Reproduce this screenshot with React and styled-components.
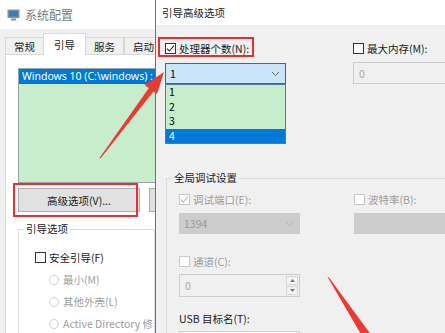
import styled, { createGlobalStyle } from "styled-components";

const GlobalStyle = createGlobalStyle`
  html, body { margin: 0; padding: 0; background: #fff; }
  body { width: 445px; height: 333px; overflow: hidden; }
  * { box-sizing: border-box; }
`;

const FONT = `"Noto Sans CJK SC", "Noto Sans", sans-serif`;

const Desktop = styled.div`
  position: relative;
  width: 445px;
  height: 333px;
  overflow: hidden;
  background: #fff;
  font-family: ${FONT};
  font-size: 10.5px;
  color: #1a1a1a;
`;

/* ---------- background window: 系统配置 ---------- */

const BgWindow = styled.div`
  position: absolute;
  left: 0;
  top: 0;
  width: 156px;
  height: 333px;
  overflow: hidden;
  display: flex;
  flex-direction: column;
  background: #f0f0f0;
`;

const BgTitle = styled.div`
  height: 29px;
  flex: none;
  background: #fff;
  display: flex;
  align-items: center;
  gap: 5px;
  padding-left: 7px;
  font-size: 12px;
  color: #7a7a7a;
`;

const TabStrip = styled.div`
  display: flex;
  align-items: flex-end;
  height: 25px;
  padding-left: 5px;
  flex: none;
`;

const Tab = styled.div`
  height: ${(p) => (p.$active ? 22 : 18)}px;
  padding: 0 ${(p) => (p.$active ? 10 : 8)}px;
  margin: 0 ${(p) => (p.$active ? -1 : 0)}px -1px;
  display: flex;
  align-items: center;
  background: ${(p) => (p.$active ? "#fff" : "#f0f0f0")};
  border: 1px solid #d9d9d9;
  border-bottom: ${(p) => (p.$active ? "none" : "1px solid #d9d9d9")};
  position: relative;
  z-index: ${(p) => (p.$active ? 2 : 1)};
  white-space: nowrap;
`;

const TabPanel = styled.div`
  flex: 1;
  margin-left: 5px;
  background: #fff;
  border: 1px solid #d9d9d9;
  padding: 13px 0 0 12px;
  white-space: nowrap;
`;

const ListBox = styled.div`
  width: 170px;
  height: 115px;
  background: #c7edcc;
  border: 1px solid #9aa3a8;
`;

const ListItem = styled.div`
  height: 15px;
  line-height: 15px;
  padding-left: 3px;
  background: ${(p) => (p.$sel ? "#0078d7" : "transparent")};
  color: ${(p) => (p.$sel ? "#fff" : "#000")};
  font-family: "Noto Sans", sans-serif;
  font-size: 10.5px;
`;

const ButtonRow = styled.div`
  display: flex;
  gap: 9px;
  margin-top: 5px;
`;

const Button = styled.div`
  width: ${(p) => p.$w}px;
  height: 24px;
  flex: none;
  display: flex;
  align-items: center;
  justify-content: center;
  background: #e1e1e1;
  border: 1px solid #adadad;
`;

const Group = styled.fieldset`
  margin: ${(p) => p.$mt}px 0 0 ${(p) => p.$ml || 0}px;
  padding: 0;
  border: 1px solid #dcdcdc;
  min-width: 0;
  height: 400px;
`;

const Legend = styled.legend`
  margin-left: ${(p) => p.$ml}px;
  padding: 0 2px;
  line-height: 14px;
  color: #1a1a1a;
`;

const GroupInner = styled.div`
  padding: ${(p) => p.$pt}px 0 0 ${(p) => p.$pl}px;
`;

const CheckRow = styled.div`
  display: flex;
  align-items: center;
  gap: 3px;
  height: 13px;
  margin-top: ${(p) => p.$mt || 0}px;
  margin-left: ${(p) => p.$ml || 0}px;
  color: ${(p) => (p.$disabled ? "#9c9c9c" : "#1a1a1a")};
  white-space: nowrap;
`;

const Box = styled.span`
  width: 11px;
  height: 11px;
  flex: none;
  border: 1px solid ${(p) => (p.$disabled ? "#c8c8c8" : "#333")};
  background: #fff;
  display: flex;
  align-items: center;
  justify-content: center;
`;

const Radio = styled.span`
  width: 10px;
  height: 10px;
  flex: none;
  border-radius: 50%;
  border: 1px solid #cfcfcf;
  background: #fff;
  margin-right: 1px;
`;

const Check = ({ checked, disabled }) => (
  <Box $disabled={disabled}>
    {checked && (
      <svg width="9" height="9" viewBox="0 0 9 9">
        <path
          d="M1 4.6 L3.4 7 L8 1.6"
          fill="none"
          stroke={disabled ? "#b5b5b5" : "#222"}
          strokeWidth="1.1"
        />
      </svg>
    )}
  </Box>
);

const AppIcon = () => (
  <svg width="13" height="12" viewBox="0 0 13 12">
    <rect x="0.5" y="0.5" width="12" height="8.5" fill="#8a8f96" />
    <rect x="2" y="2" width="9" height="5.5" fill="#2f7fd0" />
    <rect x="4" y="9.5" width="5" height="2" fill="#8a8f96" />
  </svg>
);

/* ---------- foreground dialog: 引导高级选项 ---------- */

const Dialog = styled.div`
  position: absolute;
  left: 155px;
  top: 0;
  width: 300px;
  height: 333px;
  display: flex;
  flex-direction: column;
  background: #f0f0f0;
  border-left: 1px solid #2a80d2;
  z-index: 3;
`;

const DlgTitle = styled.div`
  height: 25px;
  flex: none;
  background: #fff;
  display: flex;
  align-items: center;
  padding-left: 6px;
  color: #1a1a1a;
`;

const DlgBody = styled.div`
  padding: 17px 0 0 9px;
  white-space: nowrap;
`;

const TwoCols = styled.div`
  display: grid;
  grid-template-columns: ${(p) => p.$left}px 1fr;
`;

const Col = styled.div`
  display: flex;
  flex-direction: column;
  align-items: flex-start;
`;

const ComboWrap = styled.div`
  position: relative;
  margin-top: 8px;
`;

const Combo = styled.div`
  width: 121px;
  height: 21px;
  display: flex;
  align-items: center;
  justify-content: space-between;
  padding: 0 5px 0 4px;
  background: ${(p) => (p.$disabled ? "#cccccc" : "#cce4f7")};
  border: 1px solid ${(p) => (p.$disabled ? "#cccccc" : "#0078d7")};
  color: ${(p) => (p.$disabled ? "#9a9a9a" : "#000")};
  margin-top: ${(p) => p.$mt || 0}px;
`;

const DropList = styled.div`
  position: absolute;
  left: 0;
  top: 21px;
  width: 121px;
  background: #c7edcc;
  border: 1px solid #56799e;
  z-index: 4;
`;

const DropItem = styled.div`
  height: 14.5px;
  line-height: 14.5px;
  padding-left: 3px;
  background: ${(p) => (p.$sel ? "#0078d7" : "transparent")};
  color: ${(p) => (p.$sel ? "#fff" : "#000")};
`;

const TextBox = styled.div`
  width: ${(p) => p.$w}px;
  height: ${(p) => p.$h}px;
  margin-top: ${(p) => p.$mt}px;
  display: flex;
  align-items: center;
  padding-left: 5px;
  background: ${(p) => (p.$white ? "#fff" : "#f0f0f0")};
  border: 1px solid #cccccc;
  color: #a8a8a8;
`;

const Spinner = styled(TextBox)`
  justify-content: space-between;
  padding-right: 1px;
`;

const SpinBtns = styled.div`
  display: flex;
  flex-direction: column;
  gap: 1px;
  width: 12px;
`;

const SpinBtn = styled.div`
  height: 9px;
  border: 1px solid #d6d6d6;
  background: #f4f4f4;
  display: flex;
  align-items: center;
  justify-content: center;
`;

const FieldLabel = styled.div`
  margin-top: ${(p) => p.$mt}px;
  line-height: 14px;
  color: #1a1a1a;
`;

const Chevron = ({ color }) => (
  <svg width="9" height="6" viewBox="0 0 9 6">
    <path d="M1 1 L4.5 4.5 L8 1" fill="none" stroke={color} strokeWidth="1" />
  </svg>
);

const Tri = ({ up }) => (
  <svg width="5" height="3" viewBox="0 0 5 3">
    <path d={up ? "M0 3 L2.5 0 L5 3 Z" : "M0 0 L2.5 3 L5 0 Z"} fill="#7a7a7a" />
  </svg>
);

/* ---------- annotation overlay ---------- */

const Highlight = styled.div`
  position: absolute;
  left: ${(p) => p.$x}px;
  top: ${(p) => p.$y}px;
  width: ${(p) => p.$w}px;
  height: ${(p) => p.$h}px;
  border: 2px solid #e5302d;
  z-index: 10;
  pointer-events: none;
`;

const Arrows = styled.svg`
  position: absolute;
  left: 0;
  top: 0;
  z-index: 11;
  pointer-events: none;
`;

export default function App() {
  return (
    <>
      <GlobalStyle />
      <Desktop>
        <BgWindow>
          <BgTitle>
            <AppIcon />
            系统配置
          </BgTitle>
          <TabStrip>
            <Tab>常规</Tab>
            <Tab $active>引导</Tab>
            <Tab>服务</Tab>
            <Tab>启动</Tab>
          </TabStrip>
          <TabPanel>
            <ListBox>
              <ListItem $sel>Windows 10 (C:\windows) :</ListItem>
            </ListBox>
            <ButtonRow>
              <Button $w={122}>高级选项(V)...</Button>
              <Button $w={60} />
            </ButtonRow>
            <Group $mt={10}>
              <Legend $ml={5}>引导选项</Legend>
              <GroupInner $pt={15} $pl={16}>
                <CheckRow>
                  <Check />
                  安全引导(F)
                </CheckRow>
                <CheckRow $disabled $mt={9} $ml={14}>
                  <Radio />
                  最小(M)
                </CheckRow>
                <CheckRow $disabled $mt={9} $ml={14}>
                  <Radio />
                  其他外壳(L)
                </CheckRow>
                <CheckRow $disabled $mt={9} $ml={14}>
                  <Radio />
                  Active Directory 修
                </CheckRow>
              </GroupInner>
            </Group>
          </TabPanel>
        </BgWindow>

        <Dialog>
          <DlgTitle>引导高级选项</DlgTitle>
          <DlgBody>
            <TwoCols $left={188}>
              <Col>
                <CheckRow>
                  <Check checked />
                  处理器个数(N):
                </CheckRow>
                <ComboWrap>
                  <Combo>
                    1
                    <Chevron color="#6a6a6a" />
                  </Combo>
                  <DropList>
                    {[1, 2, 3, 4].map((n) => (
                      <DropItem key={n} $sel={n === 4}>
                        {n}
                      </DropItem>
                    ))}
                  </DropList>
                </ComboWrap>
              </Col>
              <Col>
                <CheckRow>
                  <Check />
                  最大内存(M):
                </CheckRow>
                <TextBox $w={110} $h={22} $mt={7}>
                  0
                </TextBox>
              </Col>
            </TwoCols>

            <Group $mt={87} $ml={1}>
              <Legend $ml={5}>全局调试设置</Legend>
              <GroupInner $pt={8} $pl={12}>
                <TwoCols $left={175}>
                  <Col>
                    <CheckRow $disabled>
                      <Check checked disabled />
                      调试端口(E):
                    </CheckRow>
                    <Combo $disabled $mt={7}>
                      1394
                      <Chevron color="#b8b8b8" />
                    </Combo>
                    <CheckRow $disabled $mt={21}>
                      <Check disabled />
                      通道(C):
                    </CheckRow>
                    <Spinner $w={121} $h={23} $mt={6}>
                      0
                      <SpinBtns>
                        <SpinBtn>
                          <Tri up />
                        </SpinBtn>
                        <SpinBtn>
                          <Tri />
                        </SpinBtn>
                      </SpinBtns>
                    </Spinner>
                    <FieldLabel $mt={15}>USB 目标名(T):</FieldLabel>
                    <TextBox $white $w={121} $h={22} $mt={5} />
                  </Col>
                  <Col>
                    <CheckRow $disabled>
                      <Check disabled />
                      波特率(B):
                    </CheckRow>
                    <Combo $disabled $mt={7} />
                  </Col>
                </TwoCols>
              </GroupInner>
            </Group>
          </DlgBody>
        </Dialog>

        <Highlight $x={158} $y={37} $w={96} $h={20} />
        <Highlight $x={13} $y={183} $w={125} $h={34} />

        <Arrows width="445" height="333" viewBox="0 0 445 333">
          <polygon points="99.5,158 100.5,158.6 154.2,90.5 149.4,87.3" fill="#ea3b33" />
          <polygon points="164,72 144.5,85 157,94" fill="#ea3b33" />
          <polygon points="327.5,277 329,277.5 372,336 362,336" fill="#ea3b33" />
        </Arrows>
      </Desktop>
    </>
  );
}
